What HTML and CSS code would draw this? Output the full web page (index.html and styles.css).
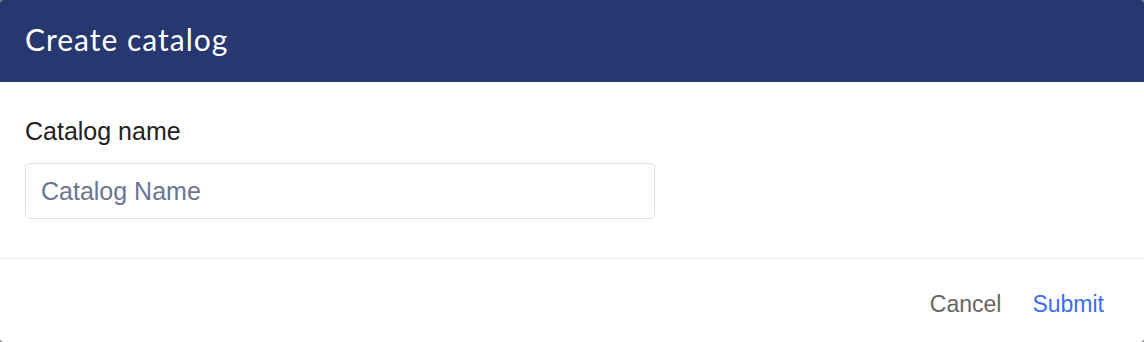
FILE: index.html
```html
<!DOCTYPE html>
<html lang="en">
<head>
<meta charset="utf-8">
<title>Create catalog</title>
<link rel="stylesheet" href="styles.css">
</head>
<body>
<div class="modal">
  <header class="modal-header">
    <h1 class="modal-title">Create catalog</h1>
  </header>
  <div class="modal-body">
    <label class="field-label" for="catalog-name">Catalog name</label>
    <input class="field-input" id="catalog-name" type="text" placeholder="Catalog Name">
  </div>
  <footer class="modal-footer">
    <button class="btn btn-cancel" type="button">Cancel</button>
    <button class="btn btn-submit" type="button">Submit</button>
  </footer>
</div>
</body>
</html>
```

FILE: styles.css
```css
html, body {
  margin: 0;
  padding: 0;
  height: 100%;
}
body {
  background: #7a7a7a;
  font-family: "Liberation Sans", Arial, sans-serif;
}
.modal {
  height: 342px;
  background: #ffffff;
  border-radius: 4px;
  overflow: hidden;
  display: flex;
  flex-direction: column;
}
.modal-header {
  height: 82px;
  background: #273770;
  display: flex;
  align-items: center;
  padding: 0 25px 5px;
  box-sizing: border-box;
}
.modal-title {
  margin: 0;
  color: #ffffff;
  font-family: Lato, "Liberation Sans", sans-serif;
  font-size: 30px;
  font-weight: 400;
  letter-spacing: 1px;
}
.modal-body {
  padding: 36px 25px 39px;
  display: flex;
  flex-direction: column;
  align-items: flex-start;
  border-bottom: 1px solid #e6ecf7;
}
.field-label {
  font-size: 25px;
  color: #222222;
  line-height: 26px;
  margin-bottom: 19px;
}
.field-input {
  width: 630px;
  height: 56px;
  box-sizing: border-box;
  border: 1px solid #dde1ea;
  border-radius: 5px;
  padding: 0 15px;
  font-family: inherit;
  font-size: 25px;
  color: #222;
  outline: none;
}
.field-input::placeholder {
  color: #6b7591;
}
.modal-footer {
  flex: 1;
  display: flex;
  justify-content: flex-end;
  align-items: center;
  gap: 31px;
  padding: 7px 40px 0 0;
}
.btn {
  background: none;
  border: none;
  font-family: inherit;
  font-size: 23px;
  line-height: normal;
  padding: 0;
  cursor: pointer;
}
.btn-cancel {
  color: #666666;
}
.btn-submit {
  color: #3b6cf5;
}
```
